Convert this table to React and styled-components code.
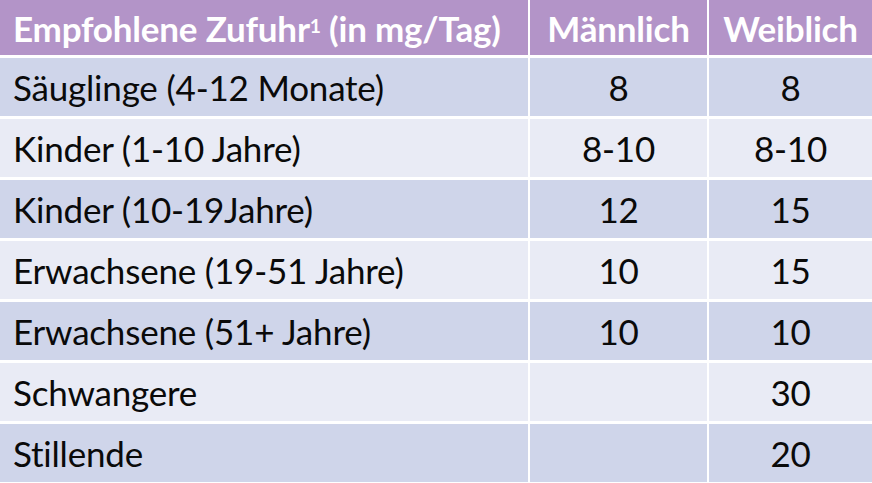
import React from 'react'
import styled, { createGlobalStyle } from 'styled-components'

const Global = createGlobalStyle`
  html, body { margin: 0; padding: 0; background: #fff; }
  body { font-family: Lato, "Open Sans", sans-serif; }
`

const Table = styled.div`
  width: 872px;
  display: grid;
  grid-template-columns: 528px 177px 1fr;
  column-gap: 2px;
  row-gap: 3px;
  background: #fff;
`

const Cell = styled.div`
  height: ${p => (p.head ? 55 : 58)}px;
  display: flex;
  align-items: center;
  justify-content: ${p => (p.center ? 'center' : 'flex-start')};
  padding: ${p => (p.center ? '0' : '0 0 0 13px')};
  box-sizing: border-box;
  background: ${p => (p.head ? '#b394c8' : p.alt ? '#e9ebf5' : '#cfd5ea')};
  color: ${p => (p.head ? '#fff' : '#0a0a0a')};
  font-weight: ${p => (p.head ? 700 : 400)};
  font-size: 35px;
  letter-spacing: -0.2px;
  white-space: nowrap;
`

const Sup = styled.sup`
  font-size: 0.55em;
  line-height: 0;
  position: relative;
  top: -0.1em;
`

const rows = [
  ['Säuglinge (4-12 Monate)', '8', '8'],
  ['Kinder (1-10 Jahre)', '8-10', '8-10'],
  ['Kinder (10-19Jahre)', '12', '15'],
  ['Erwachsene (19-51 Jahre)', '10', '15'],
  ['Erwachsene (51+ Jahre)', '10', '10'],
  ['Schwangere', '', '30'],
  ['Stillende', '', '20'],
]

export default function App() {
  return (
    <>
      <Global />
      <Table>
        <Cell head>Empfohlene Zufuhr<Sup>1</Sup>&nbsp;(in mg/Tag)</Cell>
        <Cell head center>Männlich</Cell>
        <Cell head center>Weiblich</Cell>
        {rows.map((r, i) => (
          <React.Fragment key={i}>
            <Cell alt={i % 2 === 1}>{r[0]}</Cell>
            <Cell alt={i % 2 === 1} center>{r[1]}</Cell>
            <Cell alt={i % 2 === 1} center>{r[2]}</Cell>
          </React.Fragment>
        ))}
      </Table>
    </>
  )
}
